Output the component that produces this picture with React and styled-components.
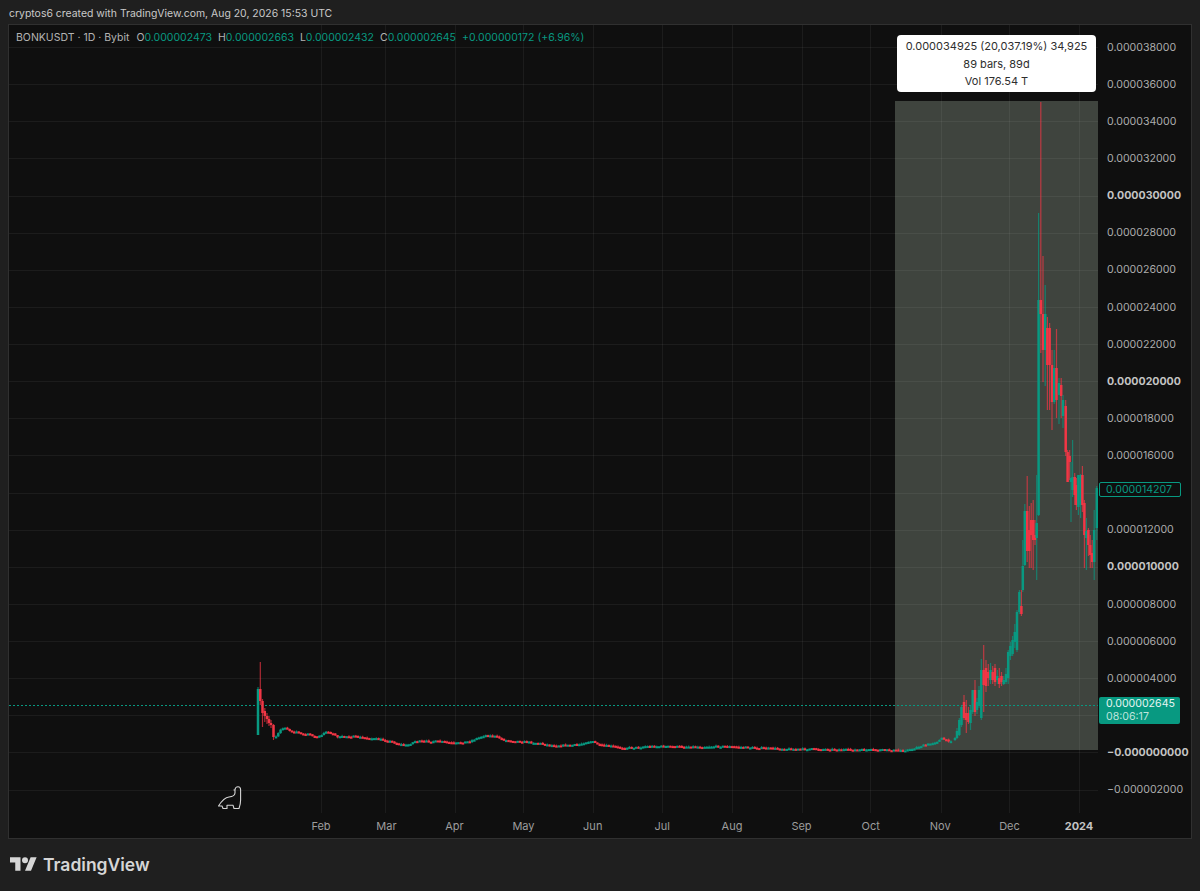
import styled, { createGlobalStyle } from "styled-components";

const GREEN = "#089981";
const RED = "#f23645";

const GlobalStyle = createGlobalStyle`
  html, body {
    margin: 0;
    padding: 0;
    background: #1f1f1f;
  }
  body {
    font-family: Inter, "Liberation Sans", sans-serif;
  }
`;

const Page = styled.div`
  width: 1200px;
  height: 891px;
  display: flex;
  flex-direction: column;
  overflow: hidden;
`;

const Header = styled.div`
  height: 24px;
  padding: 1px 0 0 9px;
  box-sizing: border-box;
  font-size: 10.45px;
  line-height: 26px;
  color: #c9c9c9;
`;

const Frame = styled.div`
  margin: 0 8px;
  height: 815px;
  box-sizing: border-box;
  border: 1px solid #303030;
  background: #0f0f0f;
  display: grid;
  grid-template-columns: 1fr 93px;
  grid-template-rows: 788px 1fr;
`;

const Pane = styled.div`
  position: relative;
  overflow: hidden;
`;

const ChartSvg = styled.svg`
  display: block;
  width: 1089px;
  height: 788px;
`;

const Legend = styled.div`
  position: absolute;
  top: 5px;
  left: 7px;
  display: flex;
  font-size: 10.5px;
  line-height: 15px;
  color: #b4b4b4;
  white-space: nowrap;
`;

const LegendTitle = styled.span`
  margin-right: 7px;
`;

const LegendItem = styled.span`
  margin-right: 6px;
`;

const LegendValue = styled.span`
  color: ${GREEN};
`;

const Measure = styled.div`
  position: absolute;
  top: 10px;
  left: 888px;
  width: 199px;
  height: 57px;
  box-sizing: border-box;
  padding: 3px 0;
  background: #fff;
  border-radius: 4px;
  font-size: 11px;
  line-height: 17.5px;
  text-align: center;
  color: #2e2e2e;
  white-space: nowrap;
`;

const DinoMark = styled.svg`
  position: absolute;
  left: 209px;
  top: 761px;
`;

const PriceAxis = styled.div`
  position: relative;
  padding-top: 3.7px;
`;

const PriceTick = styled.div`
  height: 37.125px;
  line-height: 37.125px;
  padding-left: 9px;
  font-size: 10.6px;
  font-weight: ${(p) => (p.$major ? 700 : 400)};
  color: ${(p) => (p.$major ? "#c4c4c4" : "#adadad")};
`;

const LastPrice = styled.div`
  position: absolute;
  top: 457px;
  left: 1px;
  width: 82px;
  height: 15px;
  box-sizing: border-box;
  border: 1px solid ${GREEN};
  border-radius: 2px;
  background: #0f0f0f;
  padding-left: 6px;
  font-size: 10.6px;
  line-height: 13px;
  color: ${GREEN};
`;

const CurrentPrice = styled.div`
  position: absolute;
  top: 672px;
  left: 1px;
  width: 81px;
  height: 27px;
  box-sizing: border-box;
  padding: 1px 0 0 7px;
  border-radius: 2px;
  background: ${GREEN};
  font-size: 10.6px;
  line-height: 12.5px;
  color: #e6f5f2;
`;

const Countdown = styled.div`
  color: #bfe5dd;
`;

const TimeAxis = styled.div`
  grid-column: 1 / 3;
  display: flex;
  padding-top: 1px;
  font-size: 11px;
  line-height: 25px;
  color: #9d9d9d;
`;

const TimeTick = styled.div`
  flex: none;
  text-align: center;
  font-weight: ${(p) => (p.$major ? 700 : 400)};
  color: ${(p) => (p.$major ? "#c4c4c4" : "#9d9d9d")};
`;

const Footer = styled.div`
  flex: 1;
  display: flex;
  align-items: flex-start;
  gap: 6px;
  padding: 18px 0 0 10px;
`;

const Wordmark = styled.span`
  margin-top: -2px;
  font-size: 17.5px;
  font-weight: 600;
  line-height: 20px;
  color: #d6d6d6;
`;

const priceY = (p) => Math.round(752.4 - p * 18.5625) + 0.5;

const ticks = [];
for (let p = 38; p >= -2; p -= 2) ticks.push(p);

const formatTick = (p) => {
  if (p === 0) return "\u22120.000000000";
  const s = (Math.abs(p) * 1000).toString().padStart(6, "0");
  return (p < 0 ? "\u2212" : "") + "0.000" + s;
};

const months = [
  ["Feb", 321],
  ["Mar", 385],
  ["Apr", 455],
  ["May", 523],
  ["Jun", 593],
  ["Jul", 662],
  ["Aug", 732],
  ["Sep", 802],
  ["Oct", 870],
  ["Nov", 941],
  ["Dec", 1009],
  ["2024", 1079, true],
];

// [x, open, close, high, low] in page pixels, y grows downwards
const earlyBars = [
  [258, 735, 689, 687, 735],
  [260.3, 689, 701, 662, 705],
  [262.5, 701, 713, 699, 727],
  [264.8, 711, 716, 708, 722],
  [267, 716, 719, 713, 724],
  [269, 719, 723, 716, 726],
  [271, 723, 725, 720, 728],
  [273.5, 725, 737, 724, 740],
];

const lateBars = [
  [955, 740, 738, 737, 741],
  [957, 738, 731, 728, 739],
  [959.3, 735, 720, 718, 736],
  [961.5, 725, 707, 705, 727],
  [964, 702, 718, 695, 720],
  [966.3, 713, 720, 700, 733],
  [968.5, 713, 722, 707, 724],
  [970.5, 723, 710, 706, 730],
  [972.7, 712, 690, 690, 714],
  [975, 690, 712, 680, 716],
  [977, 710, 702, 698, 714],
  [979, 706, 690, 686, 708],
  [981.3, 718, 670, 659, 720],
  [983.7, 670, 685, 645, 712],
  [986, 668, 686, 660, 692],
  [988.3, 672, 678, 664, 686],
  [990.5, 680, 670, 663, 684],
  [992.7, 672, 680, 666, 684],
  [995, 668, 682, 664, 686],
  [997.3, 680, 676, 670, 684],
  [999.3, 678, 684, 668, 688],
  [1001.5, 676, 682, 672, 686],
  [1003.7, 684, 680, 676, 685],
  [1006, 682, 674, 668, 684],
  [1008.2, 678, 652, 650, 684],
  [1010.4, 656, 646, 642, 660],
  [1012.6, 654, 640, 636, 656],
  [1014.8, 642, 632, 624, 648],
  [1017, 650, 612, 610, 652],
  [1019.4, 612, 592, 590, 614],
  [1021.4, 606, 614, 590, 616],
  [1022.8, 590, 566, 540, 592],
  [1024.8, 565, 511, 504, 566],
  [1027.2, 511, 551, 476, 562],
  [1029.3, 530, 551, 506, 568],
  [1031.2, 520, 535, 503, 568],
  [1033.2, 520, 540, 500, 570],
  [1035, 535, 540, 520, 545],
  [1036.7, 538, 523, 475, 580],
  [1038.6, 515, 300, 213, 516],
  [1040.8, 300, 314, 102, 353],
  [1043, 314, 350, 256, 382],
  [1045.2, 350, 314, 285, 386],
  [1047.4, 328, 365, 317, 410],
  [1049.6, 328, 365, 323, 410],
  [1052, 365, 402, 350, 430],
  [1054.2, 402, 368, 350, 404],
  [1056.5, 368, 400, 329, 418],
  [1059, 395, 383, 378, 424],
  [1061.2, 385, 396, 378, 418],
  [1063, 416, 400, 395, 428],
  [1065.7, 406, 452, 400, 456],
  [1067.6, 452, 482, 450, 477],
  [1069.6, 456, 462, 450, 480],
  [1071, 482, 478, 462, 522],
  [1072.6, 490, 477, 440, 497],
  [1074.7, 477, 495, 473, 505],
  [1076.4, 485, 505, 478, 510],
  [1078.4, 507, 475, 475, 515],
  [1080.6, 505, 475, 474, 518],
  [1082.4, 475, 505, 466, 512],
  [1084.4, 503, 535, 500, 568],
  [1086.4, 538, 531, 518, 570],
  [1088.4, 530, 545, 528, 556],
  [1090.3, 545, 555, 535, 568],
  [1092.2, 553, 562, 540, 568],
  [1094.2, 562, 530, 510, 580],
  [1096.8, 528, 488, 486, 540],
];

const flatLine = [
  [276, 737], [281, 729], [285, 727], [291, 731], [296, 731], [302, 734],
  [310, 734], [316, 737], [322, 735], [326, 731], [332, 733], [338, 737],
  [345, 736], [352, 736], [360, 737], [380, 739], [390, 741], [400, 744],
  [407, 745], [415, 741], [430, 741], [440, 741], [447, 742], [455, 743],
  [470, 741], [477, 738], [485, 735], [495, 736], [505, 740], [520, 741],
  [540, 743], [550, 745], [570, 745], [580, 744], [585, 742], [592, 741],
  [600, 745], [613, 746], [620, 747.5], [640, 747], [645, 746], [660, 746],
  [700, 746.5], [725, 746], [745, 747], [770, 748], [800, 749], [810, 748.5],
  [850, 749.5], [880, 749.5], [895, 750], [910, 749.5], [920, 746],
  [930, 743.5], [938, 741], [942, 738], [948, 741], [953, 740],
];

const lineAt = (x) => {
  for (let i = 1; i < flatLine.length; i++) {
    const [x0, y0] = flatLine[i - 1];
    const [x1, y1] = flatLine[i];
    if (x <= x1) return y0 + ((y1 - y0) * (x - x0)) / (x1 - x0);
  }
  return flatLine[flatLine.length - 1][1];
};

const makeFlatBars = () => {
  const out = [];
  let prev = lineAt(276);
  let seed = 7;
  const rnd = () => {
    seed = (seed * 16807) % 2147483647;
    return seed / 2147483647;
  };
  for (let x = 276; x < 953; x += 2.28) {
    const y = lineAt(x);
    const close = y + (rnd() - 0.4) * 1.4;
    out.push([x, prev, close, Math.min(prev, close) - rnd() * 1.2, Math.max(prev, close) + rnd() * 1.2]);
    prev = close;
  }
  return out;
};

const bars = [...earlyBars, ...makeFlatBars(), ...lateBars];

const Candle = ({ bar }) => {
  const [x, open, close, high, low] = bar;
  const color = close > open ? RED : GREEN;
  const top = Math.min(open, close);
  const h = Math.max(Math.abs(open - close), 2);
  return (
    <g fill={color}>
      <rect x={x - 0.6} y={high} width="1.2" height={low - high} opacity="0.7" />
      <rect x={x - 1.25} y={top} width="2.5" height={h} />
    </g>
  );
};

const Chart = () => (
  <ChartSvg viewBox="9 25 1089 788" preserveAspectRatio="none">
    <rect x="895" y="101" width="203" height="649" fill="#3f443e" />
    {ticks.map((p) => (
      <line key={p} x1="9" x2="1098" y1={priceY(p)} y2={priceY(p)} stroke="#fff" strokeOpacity="0.055" />
    ))}
    {months.map(([label, x]) => (
      <line key={label} x1={x + 0.5} x2={x + 0.5} y1="25" y2="813" stroke="#fff" strokeOpacity="0.055" />
    ))}
    <line x1="9" x2="1098" y1="705.5" y2="705.5" stroke={GREEN} strokeDasharray="2 2" shapeRendering="crispEdges" />
    {bars.map((b, i) => (
      <Candle key={i} bar={b} />
    ))}
  </ChartSvg>
);

const Dino = () => (
  <DinoMark width="24" height="24" viewBox="0 0 24 24" fill="none" stroke="#d6d6d6" strokeWidth="1.1" strokeLinejoin="round">
    <path d="M0.5 20 C3 16 6 11.5 11 11 C14.5 10.7 16.8 10 17 7 V3.8 C17 2 18.3 0.8 20 0.8 C21.6 0.8 22.6 2 22.6 3.8 V14 C22.6 17.5 22 20 21 22.5 H16 L15 19.2 H9 V22.5 H5 L4 20 Z" />
    <path d="M17 4 H15.5" />
  </DinoMark>
);

const TvLogo = () => (
  <svg width="27" height="14" viewBox="0 4 36 18" fill="#d6d6d6">
    <path d="M14 22H7V11H0V4h14v18zM28 22h-8l7.5-18h8L28 22z" />
    <circle cx="20" cy="8" r="4" />
  </svg>
);

const timeTickWidth = (i) => {
  const x = months[i][1];
  const prev = i > 0 ? months[i - 1][1] : x - 64;
  const next = i < months.length - 1 ? months[i + 1][1] : x + 70;
  return (next - prev) / 2;
};

const App = () => (
  <Page>
    <GlobalStyle />
    <Header>cryptos6 created with TradingView.com, Aug 20, 2026 15:53 UTC</Header>
    <Frame>
      <Pane>
        <Chart />
        <Legend>
          <LegendTitle>BONKUSDT · 1D · Bybit</LegendTitle>
          <LegendItem>O<LegendValue>0.000002473</LegendValue></LegendItem>
          <LegendItem>H<LegendValue>0.000002663</LegendValue></LegendItem>
          <LegendItem>L<LegendValue>0.000002432</LegendValue></LegendItem>
          <LegendItem>C<LegendValue>0.000002645</LegendValue></LegendItem>
          <LegendValue>+0.000000172 (+6.96%)</LegendValue>
        </Legend>
        <Measure>
          <div>0.000034925 (20,037.19%) 34,925</div>
          <div>89 bars, 89d</div>
          <div>Vol 176.54 T</div>
        </Measure>
        <Dino />
      </Pane>
      <PriceAxis>
        {ticks.map((p) => (
          <PriceTick key={p} $major={p === 30 || p === 20 || p === 10 || p === 0}>
            {p === 14 || p === 2 ? "" : formatTick(p)}
          </PriceTick>
        ))}
        <LastPrice>0.000014207</LastPrice>
        <CurrentPrice>
          0.000002645
          <Countdown>08:06:17</Countdown>
        </CurrentPrice>
      </PriceAxis>
      <TimeAxis style={{ paddingLeft: 321 - 9 - timeTickWidth(0) / 2 }}>
        {months.map(([label, , major], i) => (
          <TimeTick key={label} $major={major} style={{ width: timeTickWidth(i) }}>
            {label}
          </TimeTick>
        ))}
      </TimeAxis>
    </Frame>
    <Footer>
      <TvLogo />
      <Wordmark>TradingView</Wordmark>
    </Footer>
  </Page>
);

export default App;
